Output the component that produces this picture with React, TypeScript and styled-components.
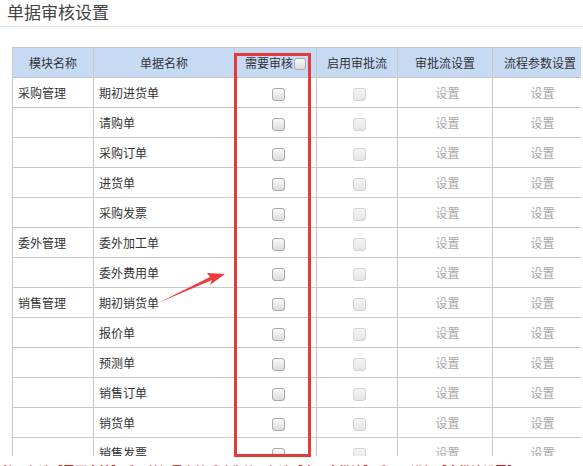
import React from 'react';
import styled, { createGlobalStyle } from 'styled-components';

const GlobalStyle = createGlobalStyle`
  html, body {
    margin: 0;
    padding: 0;
    background: #fff;
    overflow: hidden;
  }
  body {
    font-family: "Noto Sans CJK SC", "Noto Sans", sans-serif;
    color: #333;
  }
`;

const Title = styled.h1`
  margin: 0;
  height: 26px;
  padding-left: 7px;
  font-size: 17px;
  font-weight: 400;
  line-height: 23px;
  color: #444;
  border-bottom: 1px solid #e6e6e6;
`;

const Section = styled.div`
  position: relative;
  padding: 20px 0 0 12px;
`;

const TableWrap = styled.div`
  width: 569px;
  height: 409px;
  overflow: hidden;
`;

const Table = styled.table`
  width: 569px;
  table-layout: fixed;
  border-collapse: collapse;
  font-size: 12px;
`;

const Th = styled.th<{ $w: number }>`
  width: ${(p) => p.$w}px;
  height: 29px;
  padding: 0;
  background: #c6dbf3;
  border: 1px solid #c8c8c8;
  font-weight: 400;
  color: #333;
  text-align: center;
  white-space: nowrap;
`;

const Td = styled.td<{ $center?: boolean; $muted?: boolean }>`
  height: 29px;
  padding: 0 0 0 5px;
  border: 1px solid #c8c8c8;
  text-align: ${(p) => (p.$center ? 'center' : 'left')};
  color: ${(p) => (p.$muted ? '#a8a8a8' : '#333')};
  white-space: nowrap;
`;

const Box = styled.span<{ $disabled?: boolean; $small?: boolean }>`
  display: inline-block;
  vertical-align: middle;
  width: ${(p) => (p.$small ? 10 : 11)}px;
  height: ${(p) => (p.$small ? 10 : 11)}px;
  border: 1px solid ${(p) => (p.$disabled ? '#d4d4d4' : '#a9a9a9')};
  border-radius: 3px;
  background: ${(p) =>
    p.$disabled
      ? 'linear-gradient(#f4f4f4, #e6e6e6)'
      : 'linear-gradient(#fafafa, #dcdcdc)'};
`;

const HeadBox = styled(Box)`
  margin-left: 1px;
  margin-top: -2px;
`;

const RedFrame = styled.div`
  position: absolute;
  left: 234px;
  top: 26px;
  width: 71px;
  height: 398px;
  border: 3px solid #e33b3b;
  pointer-events: none;
`;

const Arrow = styled.svg`
  position: absolute;
  left: 150px;
  top: 238px;
`;

const Note = styled.p`
  margin: 6px 0 0 -9px;
  font-size: 12px;
  color: #b22222;
  white-space: nowrap;
  b {
    color: #d42020;
  }
`;

const rows: [string, string][] = [
  ['采购管理', '期初进货单'],
  ['', '请购单'],
  ['', '采购订单'],
  ['', '进货单'],
  ['', '采购发票'],
  ['委外管理', '委外加工单'],
  ['', '委外费用单'],
  ['销售管理', '期初销货单'],
  ['', '报价单'],
  ['', '预测单'],
  ['', '销售订单'],
  ['', '销货单'],
  ['', '销售发票'],
];

export default function App() {
  return (
    <>
      <GlobalStyle />
      <Title>单据审核设置</Title>
      <Section>
        <TableWrap>
          <Table>
            <thead>
              <tr>
                <Th $w={80}>模块名称</Th>
                <Th $w={140}>单据名称</Th>
                <Th $w={81}>
                  需要审核
                  <HeadBox $small />
                </Th>
                <Th $w={80}>启用审批流</Th>
                <Th $w={94}>审批流设置</Th>
                <Th $w={94}>流程参数设置</Th>
              </tr>
            </thead>
            <tbody>
              {rows.map(([mod, doc]) => (
                <tr key={doc}>
                  <Td>{mod}</Td>
                  <Td>{doc}</Td>
                  <Td $center>
                    <Box />
                  </Td>
                  <Td $center>
                    <Box $disabled />
                  </Td>
                  <Td $center $muted>设置</Td>
                  <Td $center $muted>设置</Td>
                </tr>
              ))}
            </tbody>
          </Table>
        </TableWrap>
        <Note>
          注：勾选<b>【需要审核】</b>后，单据需审核后才生效；勾选<b>【启用审批流】</b>后，可进行<b>【审批流设置】</b>。
        </Note>
        <RedFrame />
        <Arrow width="80" height="50" viewBox="0 0 80 50">
          <path d="M8 38 L62 15 L60 20 L75 9 L57 8 L60 12 Z" fill="#ee3b3b" />
        </Arrow>
      </Section>
    </>
  );
}
